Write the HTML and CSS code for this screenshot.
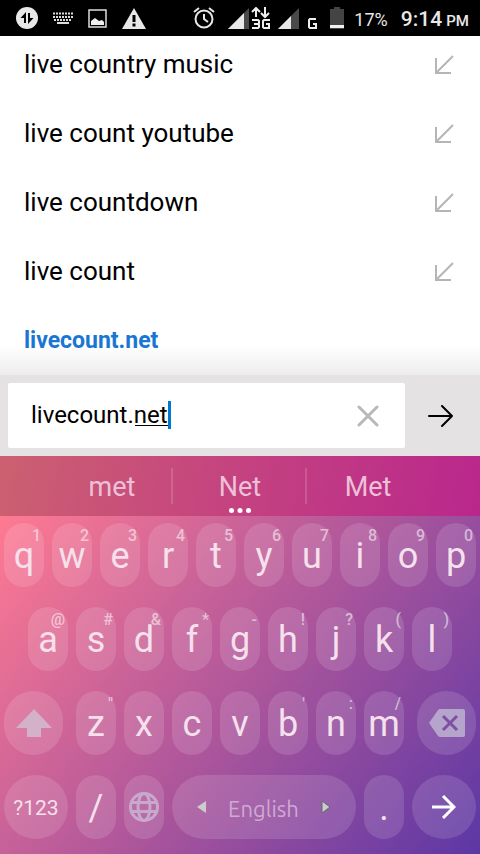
FILE: index.html
```html
<!DOCTYPE html>
<html lang="en">
<head>
<meta charset="utf-8">
<meta name="viewport" content="width=device-width, initial-scale=1">
<title>livecount.net</title>
<link rel="stylesheet" href="styles.css">
</head>
<body>
<header class="status">
  <div class="status-left">
    <svg width="22" height="22" viewBox="0 0 22 22"><circle cx="11" cy="11" r="11" fill="#e8e8e8"/><path d="M10 5v11H8v-5H4.500zM12 17V6h2v5h3.500z" fill="#000"/></svg>
    <svg width="20" height="12" viewBox="0 0 20 12"><path d="M0 1.500h20M0 5h20M1 8h18" stroke="#ddd" stroke-width="2" stroke-dasharray="2 1"/><path d="M4 11h12" stroke="#ddd" stroke-width="2"/></svg>
    <svg width="19" height="19" viewBox="0 0 19 19"><rect x="1" y="1" width="17" height="17" fill="none" stroke="#ddd" stroke-width="1.500"/><path d="M3 16v-4l4-3 4 3 3-1 2 2v3z" fill="#eee"/></svg>
    <svg width="24" height="21" viewBox="0 0 24 21"><path d="M12 0l12 21H0z" fill="#e8e8e8"/><path d="M12 7v7M12 15.500v3" stroke="#000" stroke-width="3"/></svg>
  </div>
  <div class="status-right">
    <svg width="22" height="22" viewBox="0 0 22 22" fill="none" stroke="#e8e8e8" stroke-width="2"><circle cx="11" cy="12" r="8.500"/><path d="M11 7v5l4 3M1 5l5-4M21 5l-5-4"/></svg>
    <div class="signals">
      <svg width="21" height="21" viewBox="0 0 21 21"><path d="M21 0v21H0z" fill="#4a4a4a"/><path d="M16 5v16H0z" fill="#e8e8e8"/></svg>
      <svg width="20" height="22" viewBox="0 0 20 22" fill="none" stroke="#eee" stroke-width="2"><path d="M5 10V2M1 5l4-4 4 4M14 0v9M10 6l4 4 4-4M1 13h6l1 1v2l-1 1H3M7 17l1 1v2l-1 1H1M19 13h-6l-1 1v6l1 1h5v-4h-3"/></svg>
    </div>
    <div class="signals">
      <svg width="21" height="21" viewBox="0 0 21 21"><path d="M21 0v21H0z" fill="#4a4a4a"/><path d="M13 8v13H0z" fill="#e8e8e8"/></svg>
      <svg class="net-g" width="9" height="11" viewBox="0 0 9 11"><path d="M8 1H2L1 2v7l1 1h6V6H5" fill="none" stroke="#eee" stroke-width="2"/></svg>
    </div>
    <svg class="cell" width="14" height="22" viewBox="0 0 14 22"><path d="M4 0h6v2h4v20H0V2h4z" fill="#444"/><path d="M0 18h14v3H0z" fill="#f0f0f0"/></svg>
    <span class="battery">17%</span>
    <span class="clock">9:14 <small>PM</small></span>
  </div>
</header>

<main class="suggestions">
  <ul>
    <li><a href="#">live country music</a><button aria-label="Use live country music"><svg width="20" height="20" viewBox="0 0 20 20"><path d="M2 3v15h15M2 18L19 1"/></svg></button></li>
    <li><a href="#">live count youtube</a><button aria-label="Use live count youtube"><svg width="20" height="20" viewBox="0 0 20 20"><path d="M2 3v15h15M2 18L19 1"/></svg></button></li>
    <li><a href="#">live countdown</a><button aria-label="Use live countdown"><svg width="20" height="20" viewBox="0 0 20 20"><path d="M2 3v15h15M2 18L19 1"/></svg></button></li>
    <li><a href="#">live count</a><button aria-label="Use live count"><svg width="20" height="20" viewBox="0 0 20 20"><path d="M2 3v15h15M2 18L19 1"/></svg></button></li>
    <li><a class="site" href="#">livecount.net</a></li>
  </ul>
</main>

<form class="address">
  <div class="field">
    <input type="text" value="livecount.net" aria-label="Address">
    <span class="composing"></span>
    <button type="button" aria-label="Clear"><svg width="22" height="22" viewBox="0 0 22 22"><path d="M2 2l18 18M20 2L2 20" stroke="#b8b8b8" stroke-width="3" stroke-linecap="round"/></svg></button>
  </div>
  <button class="go" type="button" aria-label="Go"><svg width="26" height="22" viewBox="0 0 26 22"><path d="M1 11h23M14 1l10 10-10 10" fill="none" stroke="#000" stroke-width="2" stroke-linecap="round" stroke-linejoin="round"/></svg></button>
</form>

<section class="keyboard" aria-label="Keyboard">
  <div class="words">
    <button>met</button>
    <button class="best">Net<svg class="dots" width="22" height="5" viewBox="0 0 22 5" fill="#fff"><circle cx="2.500" cy="2.500" r="2.500"/><circle cx="11" cy="2.500" r="2.500"/><circle cx="19.500" cy="2.500" r="2.500"/></svg></button>
    <button>Met</button>
  </div>
  <div class="keys">
    <div class="row">
      <button>q<sup>1</sup></button><button>w<sup>2</sup></button><button>e<sup>3</sup></button><button>r<sup>4</sup></button><button>t<sup>5</sup></button><button>y<sup>6</sup></button><button>u<sup>7</sup></button><button>i<sup>8</sup></button><button>o<sup>9</sup></button><button>p<sup>0</sup></button>
    </div>
    <div class="row home">
      <button>a<sup>@</sup></button><button>s<sup>#</sup></button><button>d<sup>&amp;</sup></button><button>f<sup>*</sup></button><button>g<sup>-</sup></button><button>h<sup>!</sup></button><button>j<sup>?</sup></button><button>k<sup>(</sup></button><button>l<sup>)</sup></button>
    </div>
    <div class="row">
      <button class="shift" aria-label="Shift"><svg width="36" height="28" viewBox="0 0 36 28"><path d="M18 0l18 19H25v9H11v-9H0z" fill="#d3b1c8"/></svg></button>
      <button>z<sup>"</sup></button><button>x</button><button>c</button><button>v</button><button>b<sup>'</sup></button><button>n<sup>:</sup></button><button>m<sup>/</sup></button>
      <button class="erase" aria-label="Backspace"><svg width="36" height="28" viewBox="0 0 36 28"><path d="M9 1Q10 0 11 0h23q2 0 2 2v24q0 2-2 2H11q-1 0-2-1L0 14z" fill="#b5a4cb"/><path d="M14 7l14 14M28 7L14 21" stroke="#7e4fa3" stroke-width="3"/></svg></button>
    </div>
    <div class="row">
      <button class="round symbols">?123</button>
      <button>/</button>
      <button aria-label="Change language"><svg width="30" height="30" viewBox="0 0 30 30" fill="none" stroke="#c8a9cc" stroke-width="3"><circle cx="15" cy="15" r="13.500"/><ellipse cx="15" cy="15" rx="6" ry="13.500"/><path d="M3 10.500h24M3 19.500h24"/></svg></button>
      <button class="space"><svg width="9" height="12" viewBox="0 0 9 12"><path d="M9 0v12L0 6z" fill="#ccc"/></svg><span>English</span><svg width="10" height="14" viewBox="0 0 10 14"><path d="M1 1v12l8-6z" fill="#ccc" stroke="#666" stroke-width="1"/></svg></button>
      <button>.</button>
      <button class="round" aria-label="Enter"><svg width="24" height="24" viewBox="0 0 24 24"><path d="M0 12h22M11 1l11 11-11 11" fill="none" stroke="#fff" stroke-width="3"/></svg></button>
    </div>
  </div>
</section>
</body>
</html>
```
FILE: styles.css
```css
* { box-sizing: border-box; }
body {
  margin: 0;
  background: #fff;
  color: #000;
  font-family: Roboto, "Liberation Sans", sans-serif;
}
button {
  margin: 0;
  padding: 0;
  border: 0;
  background: none;
  color: inherit;
  font: inherit;
  display: flex;
  align-items: center;
  justify-content: center;
}
svg { display: block; flex: none; }

.status {
  height: 36px;
  padding: 0 11px 0 16px;
  background: #000;
  color: #e8e8e8;
  display: flex;
  align-items: center;
  justify-content: space-between;
}
.status-left { display: flex; align-items: center; gap: 15px; }
.status-right { display: flex; align-items: center; gap: 13px; }
.signals { display: flex; align-items: center; gap: 2px; margin-right: -6px; }
.net-g { align-self: flex-end; margin: 0 6px 0 7px; }
.cell { margin-right: -3px; }
.battery { font-size: 18px; padding-top: 2px; }
.clock { font-size: 21px; font-weight: 500; padding-top: 2px; }
.clock small { font-size: 15px; margin-left: -1px; }

.suggestions {
  overflow: hidden;
  background: linear-gradient(to top, #ededed, #fff 30px);
}
.suggestions ul { list-style: none; margin: -7px 0 0; padding: 0 0 1px; }
.suggestions li {
  height: 69px;
  padding: 0 26px 0 24px;
  display: flex;
  align-items: center;
  justify-content: space-between;
  font-size: 26px;
}
.suggestions a { color: #000; text-decoration: none; }
.suggestions .site { color: #1976d2; font-size: 23px; font-weight: 700; padding-top: 2px; }
.suggestions svg { fill: none; stroke: #b5b5b5; stroke-width: 2; }
.suggestions li button { padding-top: 2px; }

.address {
  padding: 8px 0 8px 8px;
  background: #e5e2e4;
  display: flex;
}
.field {
  position: relative;
  flex: 1;
  min-width: 0;
  height: 65px;
  padding: 0 26px 0 23px;
  border-radius: 2px;
  background: #fff;
  display: flex;
  align-items: center;
}
.field input {
  flex: 1;
  min-width: 0;
  padding: 0 0 2px;
  border: 0;
  outline: 0;
  background: none;
  color: #000;
  font: 24px Roboto, "Liberation Sans", sans-serif;
}
.composing {
  position: absolute;
  left: 127px;
  top: 18px;
  width: 36px;
  height: 28px;
  border-right: 3px solid #0078d0;
  background: linear-gradient(#000, #000) 0 24px / 100% 1px no-repeat;
}
.go { width: 75px; padding-right: 4px; }

.words {
  height: 60px;
  padding: 0 48px;
  background: linear-gradient(100deg, #cc6070, #c5457f 45%, #b9278c);
  color: #eec0d8;
  font-size: 27px;
  display: flex;
  align-items: center;
}
.words button { position: relative; flex: 1; height: 60px; padding-top: 2px; }
.words .best::before,
.words .best::after {
  content: "";
  position: absolute;
  top: 12px;
  left: -5px;
  width: 2px;
  height: 36px;
  background: rgba(255, 255, 255, .15);
}
.words .best::after { left: auto; right: -3px; }
.dots { position: absolute; bottom: 3px; }

.keys {
  padding: 7px 4px 15px;
  background: linear-gradient(128deg, #ff7a92, #b0579b 50%, #5c37a5);
  color: #f5e0ec;
  display: grid;
  gap: 20px;
}
.row { display: flex; gap: 8px; }
.home { padding: 0 24px; }
.row button {
  position: relative;
  flex: 40 1 0;
  min-width: 0;
  height: 64px;
  padding-top: 2px;
  border-radius: 32px;
  background: rgba(255, 255, 255, .13);
  font-size: 36px;
}
.row button:not(.round):not(.space):not(.shift):not(.erase) { border-radius: 20px; }
.row sup {
  position: absolute;
  top: 3px;
  right: 3px;
  font-size: 16px;
  font-weight: 500;
  line-height: 19px;
  color: rgba(255, 255, 255, .55);
}
.row .shift { flex-grow: 59; margin-right: 5px; }
.row .erase { flex-grow: 59; margin-left: 5px; }
.row .round { flex-grow: 64; }
.row .symbols { font-size: 21px; }
.row .space {
  flex-grow: 184;
  gap: 22px;
  font: 22px Ubuntu, "Open Sans", "Noto Sans", sans-serif;
  color: #cfa9d2;
}
.row button svg { margin-top: -2px; }
```
